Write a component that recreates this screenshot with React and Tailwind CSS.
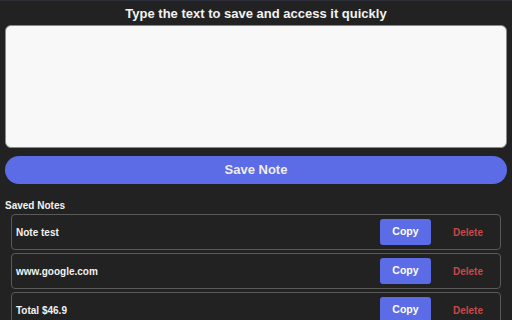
import React from "react";

const notes = ["Note test", "www.google.com", "Total $46.9"];

export default function App() {
  return (
    <div
      className="w-[512px] h-[320px] overflow-hidden bg-[#222222] border-t border-[#2c2e3a] px-[5px]"
      style={{ fontFamily: '"Liberation Sans", Arial, sans-serif' }}
    >
      <div className="pt-[5px] h-[24px] text-center text-[13px] leading-[16px] font-bold text-[#f2f2f2]">
        Type the text to save and access it quickly
      </div>
      <textarea className="block w-full h-[123px] rounded-[6px] bg-[#f8f8f8] border border-[#8a8a8a] resize-none outline-none" />
      <button className="mt-[8px] w-full h-[28px] rounded-full bg-[#5c6be6] text-[13px] font-bold text-[#eeeeee] flex items-center justify-center">
        Save Note
      </button>
      <div className="mt-[16px] h-[14px] text-[10px] leading-[12px] font-bold text-[#f2f2f2]">
        Saved Notes
      </div>
      <div className="mx-[6px] flex flex-col gap-[3px]">
        {notes.map((n) => (
          <div
            key={n}
            className="h-[36px] shrink-0 border border-[#5a5a5a] rounded-[4px] flex items-center pl-[4px]"
          >
            <span className="flex-1 text-[10px] font-bold text-[#f2f2f2]">{n}</span>
            <button className="w-[51px] h-[26px] rounded-[3px] bg-[#5c6be6] text-[10.5px] font-bold text-white">
              Copy
            </button>
            <button className="ml-[22px] mr-[17px] text-[10px] font-bold text-[#c9484a]">
              Delete
            </button>
          </div>
        ))}
      </div>
    </div>
  );
}
